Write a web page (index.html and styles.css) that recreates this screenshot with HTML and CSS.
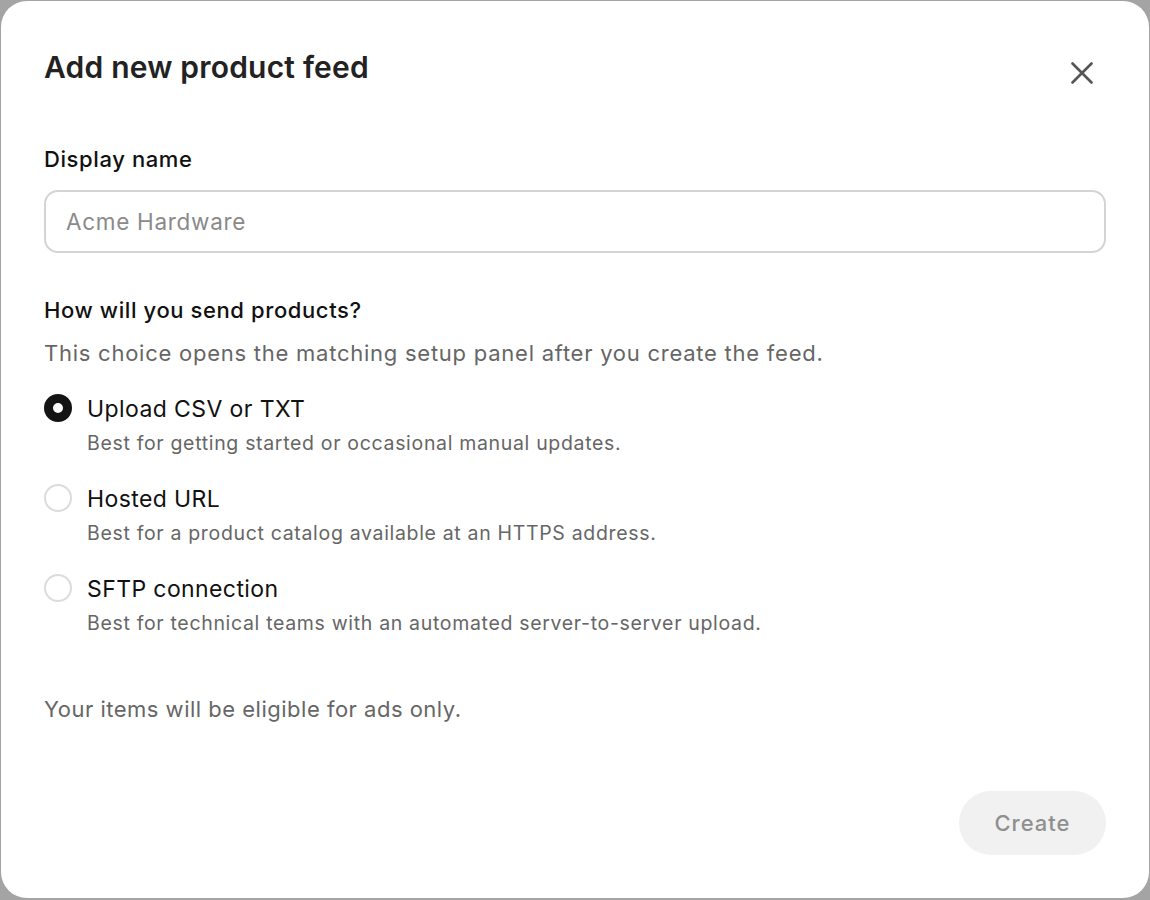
FILE: index.html
```html
<!DOCTYPE html>
<html lang="en">
<head>
<meta charset="utf-8">
<title>Add new product feed</title>
<link rel="stylesheet" href="styles.css">
</head>
<body>
<div class="modal">
  <div class="header">
    <h1 class="title">Add new product feed</h1>
    <button class="close" aria-label="Close">
      <svg width="22" height="22" viewBox="0 0 22 22"><path d="M1.5 1.5 L20.5 20.5 M20.5 1.5 L1.5 20.5" stroke="#555" stroke-width="2.6" stroke-linecap="round" fill="none"/></svg>
    </button>
  </div>
  <div class="field">
    <label class="label">Display name</label>
    <div class="input">Acme Hardware</div>
  </div>
  <div class="section">
    <div class="label">How will you send products?</div>
    <div class="desc">This choice opens the matching setup panel after you create the feed.</div>
    <div class="options">
      <div class="option">
        <span class="radio checked"></span>
        <div class="opt-text">
          <div class="opt-title">Upload CSV or TXT</div>
          <div class="opt-sub">Best for getting started or occasional manual updates.</div>
        </div>
      </div>
      <div class="option">
        <span class="radio"></span>
        <div class="opt-text">
          <div class="opt-title">Hosted URL</div>
          <div class="opt-sub">Best for a product catalog available at an HTTPS address.</div>
        </div>
      </div>
      <div class="option">
        <span class="radio"></span>
        <div class="opt-text">
          <div class="opt-title">SFTP connection</div>
          <div class="opt-sub">Best for technical teams with an automated server-to-server upload.</div>
        </div>
      </div>
    </div>
  </div>
  <div class="note">Your items will be eligible for ads only.</div>
  <div class="footer">
    <button class="create">Create</button>
  </div>
</div>
</body>
</html>
```
FILE: styles.css
```css
* { box-sizing: border-box; }
html, body { margin: 0; padding: 0; }
body {
  background: #a4a4a4;
  font-family: "Inter", "Noto Sans", sans-serif;
  width: 1150px;
  height: 900px;
  overflow: hidden;
  padding: 1px 1px 2px 1px;
}
.modal {
  background: #fff;
  height: 897px;
  border-radius: 26px;
  padding: 0 43px;
  display: flex;
  flex-direction: column;
}
.header {
  display: flex;
  justify-content: space-between;
  align-items: flex-start;
  padding-top: 47px;
}
.title {
  margin: 0;
  font-size: 30px;
  font-weight: 600;
  color: #222;
  letter-spacing: 0.2px;
  line-height: 38px;
}
.close {
  border: 0;
  background: none;
  padding: 0;
  margin: 14px 13px 0 0;
  width: 22px;
  height: 22px;
  display: flex;
}
.field {
  margin-top: 58px;
  display: flex;
  flex-direction: column;
}
.label {
  font-size: 22px;
  font-weight: 500;
  color: #111;
  line-height: 30px;
  letter-spacing: 0.6px;
}
.input {
  margin-top: 16px;
  height: 63px;
  border: 2px solid #d4d4d4;
  border-radius: 14px;
  padding: 0 20px;
  display: flex;
  align-items: center;
  font-size: 22.5px;
  color: #8a8a8a;
  letter-spacing: 0.7px;
}
.section { margin-top: 42px; }
.desc {
  margin-top: 13px;
  font-size: 22px;
  color: #666;
  line-height: 30px;
  letter-spacing: 0.75px;
}
.options {
  margin-top: 26px;
  display: flex;
  flex-direction: column;
  gap: 28px;
}
.option {
  display: flex;
  align-items: flex-start;
  gap: 15px;
}
.radio {
  width: 28px;
  height: 28px;
  border-radius: 50%;
  border: 2px solid #dcdcdc;
  flex: none;
}
.radio.checked {
  border: 9px solid #141414;
  background: #fff;
}
.opt-title {
  font-size: 23px;
  color: #111;
  line-height: 30px;
  letter-spacing: 0.4px;
}
.opt-sub {
  margin-top: 6px;
  font-size: 19.5px;
  color: #666;
  line-height: 26px;
  letter-spacing: 0.67px;
}
.note {
  margin-top: 58px;
  font-size: 22px;
  color: #666;
  line-height: 30px;
  letter-spacing: 0.5px;
}
.footer {
  margin-top: auto;
  padding-bottom: 43px;
  display: flex;
  justify-content: flex-end;
}
.create {
  width: 147px;
  height: 64px;
  border: 0;
  border-radius: 32px;
  background: #f1f1f1;
  color: #8f8f8f;
  font-family: inherit;
  font-size: 22px;
  font-weight: 500;
  letter-spacing: 1px;
}
```
